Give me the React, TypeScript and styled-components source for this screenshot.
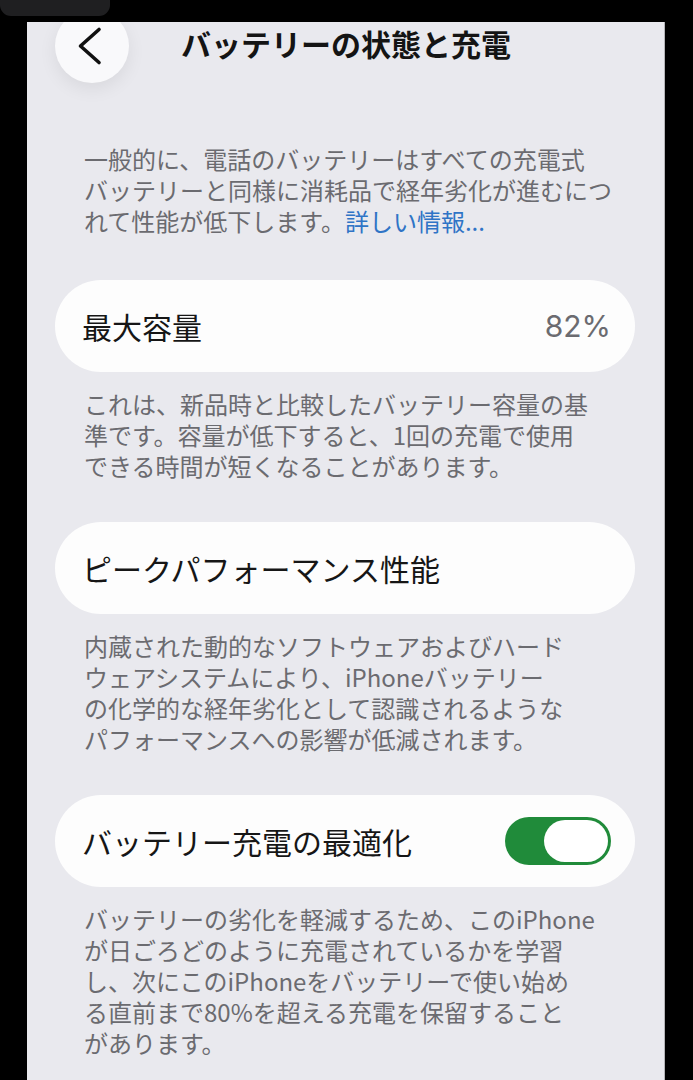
import styled, { createGlobalStyle } from 'styled-components';

const GlobalStyle = createGlobalStyle`
  html, body {
    margin: 0;
    padding: 0;
    background: #000;
  }
  body {
    font-family: "Noto Sans CJK JP", "Noto Sans", sans-serif;
    -webkit-font-smoothing: antialiased;
  }
`;

interface CardRow {
  label: string;
  value?: string;
  toggle?: boolean;
  note: string[];
}

const rows: CardRow[] = [
  {
    label: '最大容量',
    value: '82%',
    note: [
      'これは、新品時と比較したバッテリー容量の基',
      '準です。容量が低下すると、1回の充電で使用',
      'できる時間が短くなることがあります。',
    ],
  },
  {
    label: 'ピークパフォーマンス性能',
    note: [
      '内蔵された動的なソフトウェアおよびハード',
      'ウェアシステムにより、iPhoneバッテリー',
      'の化学的な経年劣化として認識されるような',
      'パフォーマンスへの影響が低減されます。',
    ],
  },
  {
    label: 'バッテリー充電の最適化',
    toggle: true,
    note: [
      'バッテリーの劣化を軽減するため、このiPhone',
      'が日ごろどのように充電されているかを学習',
      'し、次にこのiPhoneをバッテリーで使い始め',
      'る直前まで80%を超える充電を保留すること',
      'があります。',
    ],
  },
];

function Lines({ lines }: { lines: string[] }) {
  return (
    <>
      {lines.map((line) => (
        <Line key={line}>{line}</Line>
      ))}
    </>
  );
}

export default function App() {
  return (
    <>
      <GlobalStyle />
      <TopStrip>
        <Pill />
      </TopStrip>
      <Panel>
        <Header>
          <BackButton aria-label="戻る">
            <svg width="74" height="74" viewBox="0 0 74 74">
              <path
                d="M44 20.5 L25.5 37 L44 53.5"
                fill="none"
                stroke="#111"
                strokeWidth="3.6"
                strokeLinecap="round"
                strokeLinejoin="round"
              />
            </svg>
          </BackButton>
          <Title>バッテリーの状態と充電</Title>
        </Header>

        <Intro>
          <Line>一般的に、電話のバッテリーはすべての充電式</Line>
          <Line>バッテリーと同様に消耗品で経年劣化が進むにつ</Line>
          <Line>
            れて性能が低下します。<Link>詳しい情報...</Link>
          </Line>
        </Intro>

        {rows.map((row) => (
          <Section key={row.label}>
            <Card>
              <Label>{row.label}</Label>
              {row.value && <Value>{row.value}</Value>}
              {row.toggle && (
                <Switch $on>
                  <Knob />
                </Switch>
              )}
            </Card>
            <Footer>
              <Lines lines={row.note} />
            </Footer>
          </Section>
        ))}
      </Panel>
    </>
  );
}

const TopStrip = styled.div`
  height: 22px;
  display: flex;
  align-items: flex-start;
`;

const Pill = styled.div`
  width: 110px;
  height: 16px;
  background: #1f1f21;
  border-radius: 0 0 11px 11px;
`;

const Panel = styled.div`
  margin-left: 27px;
  width: 638px;
  min-height: calc(100vh - 22px);
  background: #e9e9ee;
  border-right: 1px solid #b4b4b8;
  overflow: hidden;
  padding-bottom: 20px;
  box-sizing: border-box;
`;

const Header = styled.div`
  display: flex;
  align-items: center;
  gap: 52px;
  margin-top: -13px;
  padding-left: 28px;
`;

const BackButton = styled.div`
  width: 74px;
  height: 74px;
  border-radius: 50%;
  background: #f9f9fb;
  box-shadow: 0 6px 18px rgba(0, 0, 0, 0.07);
  flex-shrink: 0;
  display: flex;

  svg {
    display: block;
  }
`;

const Title = styled.h1`
  margin: 0 0 7px;
  font-size: 30px;
  font-weight: 700;
  color: #141414;
  letter-spacing: 0;
  line-height: 1;
`;

const Line = styled.span`
  display: block;
  white-space: nowrap;
`;

const Intro = styled.div`
  margin: 60px 28px 0 57px;
  font-size: 24px;
  line-height: 31px;
  color: #6b6b70;
`;

const Link = styled.span`
  color: #2f74c6;
`;

const Section = styled.section`
  margin-top: 44px;

  & + & {
    margin-top: 41px;
  }
`;

const Card = styled.div`
  height: 92px;
  margin: 0 29px 0 28px;
  padding: 0 27px;
  border-radius: 46px;
  background: #fdfdfd;
  display: flex;
  align-items: center;
  justify-content: space-between;
`;

const Label = styled.span`
  font-size: 30px;
  color: #161616;
  white-space: nowrap;
`;

const Value = styled.span`
  font-family: Inter, "Noto Sans", sans-serif;
  font-size: 30px;
  color: #6b6b70;
  margin-right: -3px;
`;

const Switch = styled.div<{ $on: boolean }>`
  width: 106px;
  height: 48px;
  border-radius: 24px;
  background: ${(props) => (props.$on ? '#208b3a' : '#d6d6db')};
  padding: 3px;
  box-sizing: border-box;
  display: flex;
  justify-content: ${(props) => (props.$on ? 'flex-end' : 'flex-start')};
  margin-right: -3px;
`;

const Knob = styled.div`
  width: 64px;
  height: 42px;
  border-radius: 21px;
  background: #fff;
`;

const Footer = styled.div`
  margin: 16px 28px 0 57px;
  font-size: 24px;
  line-height: 31px;
  color: #6b6b70;
`;
